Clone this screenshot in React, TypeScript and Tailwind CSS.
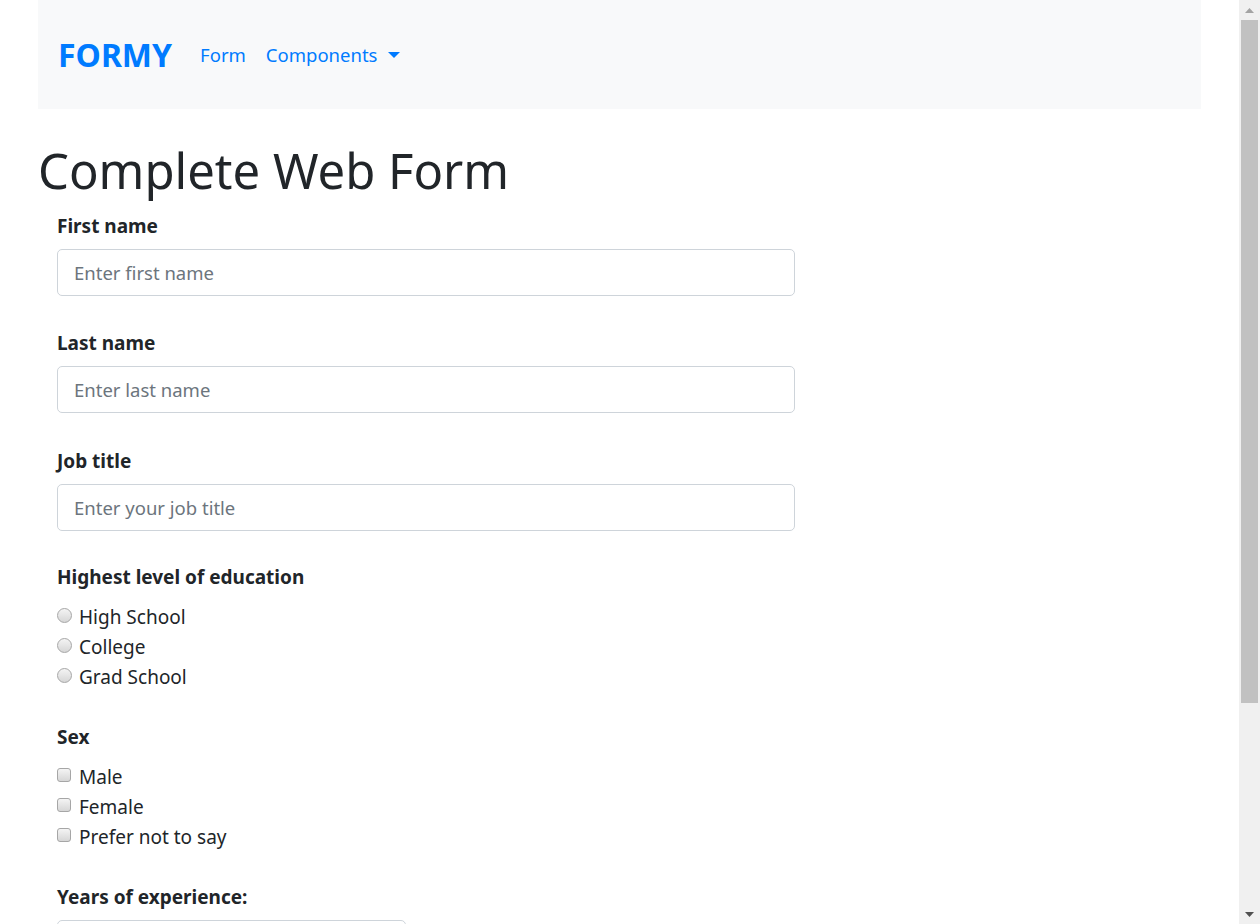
import React from "react";

const TextGroup = ({ label, placeholder, mb = "mb-[31px]" }: { label: string; placeholder: string; mb?: string }) => (
  <div className={mb}>
    <label className="block text-[19px] leading-[30px] font-bold pt-[1px] mb-[8px]">{label}</label>
    <input
      placeholder={placeholder}
      className="block w-[738px] h-[47px] rounded-[5px] border border-[#ced4da] px-[16px] text-[18.5px] text-[#495057] placeholder:text-[#6c757d] outline-none bg-white"
    />
  </div>
);

const Radio = ({ label }: { label: string }) => (
  <div className="flex items-center h-[30px] pt-[1px]">
    <span className="w-[15px] h-[15px] rounded-full border border-[#a6a6a6] bg-gradient-to-b from-[#f4f4f4] to-[#d6d6d6] mr-[7px] -mt-[3px]" />
    <span className="text-[19px] leading-[30px]">{label}</span>
  </div>
);

const Check = ({ label }: { label: string }) => (
  <div className="flex items-center h-[30px] pt-[1px]">
    <span className="w-[14px] h-[14px] rounded-[3px] border border-[#a6a6a6] bg-gradient-to-b from-[#f4f4f4] to-[#d6d6d6] mr-[8px] -mt-[3px]" />
    <span className="text-[19px] leading-[30px]">{label}</span>
  </div>
);

export default function App() {
  return (
    <div className="flex h-[924px] w-[1260px] overflow-hidden bg-white text-[#212529] font-['Noto_Sans','Open_Sans',sans-serif]">
      <div className="w-[1239px] shrink-0">
        <div className="mx-[38px]">
          <nav className="h-[109px] bg-[#f8f9fa] flex items-center px-[20px]">
            <span className="text-[32px] font-bold text-[#007bff] leading-none mr-[18px]">FORMY</span>
            <span className="text-[18.5px] text-[#007bff] px-[10px]">Form</span>
            <span className="text-[18.5px] text-[#007bff] px-[10px] flex items-center">
              Components
              <span className="ml-[11px] w-0 h-0 border-l-[6px] border-r-[6px] border-t-[6px] border-l-transparent border-r-transparent border-t-[#007bff]" />
            </span>
          </nav>
          <h1 className="mt-[31px] mb-[10px] text-[49px] leading-[60px] font-normal">Complete Web Form</h1>
          <form className="pl-[19px]">
            <TextGroup label="First name" placeholder="Enter first name" />
            <TextGroup label="Last name" placeholder="Enter last name" mb="mb-[32px]" />
            <TextGroup label="Job title" placeholder="Enter your job title" mb="mb-[30px]" />
            <div className="mb-[30px]">
              <label className="block text-[19px] leading-[30px] font-bold pt-[1px] mb-[9px]">Highest level of education</label>
              <Radio label="High School" />
              <Radio label="College" />
              <Radio label="Grad School" />
            </div>
            <div className="mb-[30px]">
              <label className="block text-[19px] leading-[30px] font-bold pt-[1px] mb-[9px]">Sex</label>
              <Check label="Male" />
              <Check label="Female" />
              <Check label="Prefer not to say" />
            </div>
            <div>
              <label className="block text-[19px] leading-[30px] font-bold pt-[1px] mb-[8px]">Years of experience:</label>
              <div className="w-[349px] h-[47px] rounded-[5px] border border-[#ced4da]" />
            </div>
          </form>
        </div>
      </div>
      <div className="w-[21px] shrink-0 bg-[#f0f0f0] flex flex-col items-center">
        <div className="h-[20px] flex items-center justify-center">
          <svg width="9" height="5" viewBox="0 0 9 5"><path d="M4.5 0 L9 5 L0 5 Z" fill="#a3a3a3" /></svg>
        </div>
        <div className="w-[17px] h-[683px] bg-[#c1c1c1]" />
        <div className="flex-1" />
        <div className="h-[20px] flex items-center justify-center">
          <svg width="9" height="5" viewBox="0 0 9 5"><path d="M0 0 L9 0 L4.5 5 Z" fill="#505050" /></svg>
        </div>
      </div>
    </div>
  );
}
